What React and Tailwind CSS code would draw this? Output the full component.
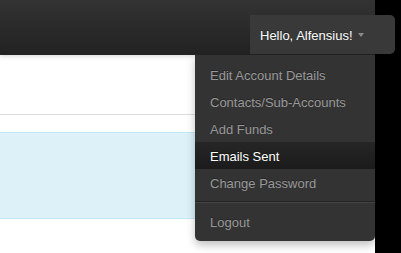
const ITEMS = [
  { label: 'Edit Account Details' },
  { label: 'Contacts/Sub-Accounts' },
  { label: 'Add Funds' },
  { label: 'Emails Sent', active: true },
  { label: 'Change Password' },
]

export default function App() {
  return (
    <div className="w-[401px] h-[253px] bg-black overflow-hidden font-['Liberation_Sans',Arial,sans-serif] text-[13px]">
      <div className="relative w-[375px] h-[253px] bg-white">
        <div className="relative z-10 h-[55px] flex justify-end items-start bg-gradient-to-b from-[#333333] to-[#222222] shadow-[0_1px_5px_rgba(0,0,0,0.18)]">
          <button className="mt-[15px] mr-[-20px] w-[145px] h-[39px] flex items-center pl-[10px] pt-[2px] bg-[#393939] rounded-tr-[5px] rounded-br-[5px] text-white [text-shadow:0_-1px_0_rgba(0,0,0,0.35)]">
            Hello, Alfensius!
            <span className="ml-[5px] mt-[-2px] w-0 h-0 border-l-[3px] border-r-[3px] border-t-[4px] border-l-transparent border-r-transparent border-t-[#8a8a8a]" />
          </button>
        </div>

        <div className="pt-[59px]">
          <div className="h-px bg-[#dddddd]" />
          <div className="mt-[17px] h-[87px] bg-[#ddf1f9] border-y border-[#c3e8f5]" />
        </div>

        <div className="absolute z-20 left-[195px] top-[55px] w-[180px] pt-[6px] pb-[6px] bg-[#333333] rounded-b-[5px] shadow-[0_4px_8px_rgba(0,0,0,0.25)]">
          {ITEMS.map(it => (
            <div key={it.label}
              className={`h-[27px] flex items-center pl-[15px] pt-[2px] ${
                it.active ? 'bg-gradient-to-b from-[#262626] to-[#1b1b1b] text-white' : 'text-[#999999]'
              } [text-shadow:0_-1px_0_rgba(0,0,0,0.3)]`}>
              {it.label}
            </div>
          ))}
          <div className="my-[5px] h-[2px] border-t border-[#222222] border-b border-b-[#444444]" />
          <div className="h-[27px] flex items-center pl-[15px] pt-[2px] text-[#999999] [text-shadow:0_-1px_0_rgba(0,0,0,0.3)]">
            Logout
          </div>
        </div>
      </div>
    </div>
  )
}
